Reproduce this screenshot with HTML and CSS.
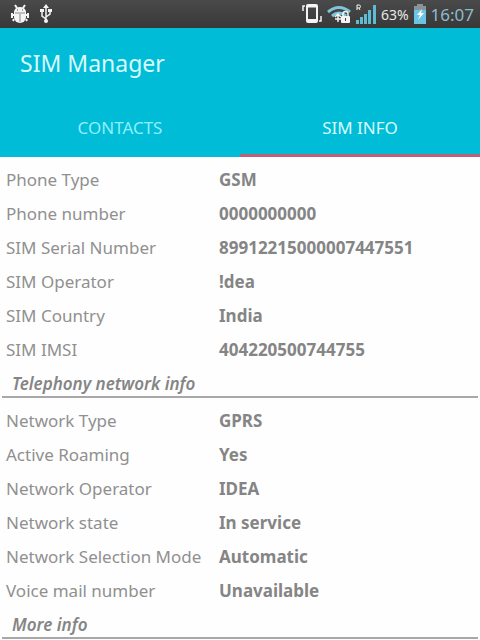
FILE: index.html
```html
<!DOCTYPE html>
<html lang="en">
  <head>
    <meta charset="UTF-8" />
    <meta name="viewport" content="width=device-width, initial-scale=1.0" />
    <title>SIM Manager</title>
    <link rel="stylesheet" href="styles.css">
  </head>
  <body>
    <div class="status-bar">
      <div class="status-group notifications">
        <svg width="20" height="20" viewBox="0 0 20 20" fill="#f4f4f4" stroke="#f4f4f4">
          <path d="M5 1l2 3M15 1l-2 3M2 9v5M18 9v5M2 11h3M15 11h3M4 15l-1 2M16 15l1 2" stroke-width="2" fill="none" />
          <path d="M4 8a6 5 0 0 1 12 0z" stroke="none" />
          <path d="M4 8h12v5a6 6 0 0 1-12 0z" stroke="none" />
          <path d="M10 10v8M5 9h10" stroke="#888" fill="none" />
          <path d="M7 6h1M12 6h1" stroke="#555" />
        </svg>
        <svg width="12" height="20" viewBox="0 0 12 20" fill="#f4f4f4" stroke="#f4f4f4">
          <path d="M6 3v13M6 15l-4-3V7M6 13l4-3V6" stroke-width="1.500" fill="none" />
          <path d="M6 0l3 4H3zM0 5h4v3H0zM8 5h4v3H8z" stroke="none" />
          <circle cx="6" cy="17" r="2" stroke="none" />
        </svg>
      </div>
      <div class="status-group">
        <svg width="22" height="20" viewBox="0 0 22 20" fill="none" stroke="#f4f4f4">
          <rect x="6" y="1" width="10" height="17" rx="1" stroke-width="2" />
          <path d="M6 2.500h10M6 16h10" stroke-width="2" />
          <path d="M4 2H2v5M18 17h2v-5" stroke-width="1.500" />
        </svg>
        <svg width="24" height="20" viewBox="0 0 24 20" fill="none" stroke="#7fc6da">
          <path d="M1 8q11-9 22 0M5 12q7-6 14 0" stroke-width="3" />
          <path d="M8 13l3-3 3 3M11 10v8M8 15h6" stroke="#f4f4f4" stroke-width="1.500" />
          <rect x="14" y="12" width="9" height="7" rx="1" fill="#f4f4f4" stroke="none" />
          <path d="M16 12v-2a2.500 2.500 0 0 1 5 0v2" stroke="#f4f4f4" stroke-width="1.500" />
          <path d="M18.500 14v3" stroke="#444" />
        </svg>
        <svg width="22" height="22" viewBox="0 0 22 22" fill="#5dbcd4">
          <path d="M1 17h3v4H1zM5 14h3v7H5zM9 11h3v10H9zM13 7h3v14h-3zM18 2h3v19h-3z" />
          <path d="M2 7V2h2a1.500 1.500 0 0 1 0 3H2M4 5l1 2" fill="none" stroke="#f4f4f4" />
        </svg>
        <span class="battery-level">63%</span>
        <svg width="14" height="20" viewBox="0 0 14 20">
          <path d="M4 0h6v2h3v18H1V2h3z" fill="#8a9498" />
          <path d="M1 6h12v14H1z" fill="#6cc4e4" />
          <path d="M9 5l-5 6h3l-2 5 6-7H8z" fill="#fff" />
        </svg>
        <time class="clock">16:07</time>
      </div>
    </div>

    <header class="app-bar">
      <h1>SIM Manager</h1>
      <nav class="tabs">
        <a class="tab" href="#contacts">CONTACTS</a>
        <a class="tab active" href="#sim-info" aria-current="page">SIM INFO</a>
      </nav>
    </header>

    <main id="sim-info">
      <table class="info">
        <tr><th scope="row">Phone Type</th><td>GSM</td></tr>
        <tr><th scope="row">Phone number</th><td>0000000000</td></tr>
        <tr><th scope="row">SIM Serial Number</th><td>89912215000007447551</td></tr>
        <tr><th scope="row">SIM Operator</th><td>!dea</td></tr>
        <tr><th scope="row">SIM Country</th><td>India</td></tr>
        <tr><th scope="row">SIM IMSI</th><td>404220500744755</td></tr>
      </table>

      <h2>Telephony network info</h2>
      <table class="info">
        <tr><th scope="row">Network Type</th><td>GPRS</td></tr>
        <tr><th scope="row">Active Roaming</th><td>Yes</td></tr>
        <tr><th scope="row">Network Operator</th><td>IDEA</td></tr>
        <tr><th scope="row">Network state</th><td>In service</td></tr>
        <tr><th scope="row">Network Selection Mode</th><td>Automatic</td></tr>
        <tr><th scope="row">Voice mail number</th><td>Unavailable</td></tr>
      </table>

      <h2>More info</h2>
    </main>
  </body>
</html>
```
FILE: styles.css
```css
body {
  margin: 0;
  background-color: #fefefe;
  color: #858585;
  font-family: "Noto Sans", "Open Sans", sans-serif;
  font-size: 17px;
}

.status-bar {
  display: flex;
  justify-content: space-between;
  align-items: center;
  height: 28px;
  padding: 0 6px 0 10px;
  background: linear-gradient(#4a4a4a, #383838);
}

.status-group {
  display: flex;
  align-items: center;
  gap: 4px;
}

.notifications {
  gap: 10px;
}

.battery-level {
  color: #e8e8e8;
  font-size: 14px;
}

.clock {
  color: #8cbccb;
  font-size: 17px;
}

.app-bar {
  background-color: #00bcd6;
}

h1 {
  margin: 0;
  padding: 15px 20px;
  color: #d8fbff;
  font-size: 23px;
  font-weight: normal;
  line-height: 40px;
}

.tabs {
  display: flex;
}

.tab {
  flex: 1;
  padding-top: 3px;
  border-bottom: 3px solid transparent;
  color: #8cf0fa;
  font-size: 17px;
  line-height: 53px;
  text-align: center;
  text-decoration: none;
}

.tab.active {
  border-bottom-color: #c0607a;
  color: #d8fbff;
}

.info {
  width: 100%;
  padding-top: 6px;
  border-collapse: separate;
  border-spacing: 0;
  table-layout: fixed;
}

.info th,
.info td {
  padding: 0;
  line-height: 34px;
  text-align: left;
}

.info th {
  box-sizing: border-box;
  width: 45%;
  padding-left: 6px;
  color: #909090;
  font-weight: normal;
}

.info td {
  padding-left: 3px;
  font-weight: bold;
}

h2 {
  margin: 0 2px;
  padding: 5px 10px 0;
  border-bottom: 2px solid #a8a8a8;
  font-size: 17px;
  font-style: italic;
  font-weight: 600;
  line-height: 24px;
}
```
